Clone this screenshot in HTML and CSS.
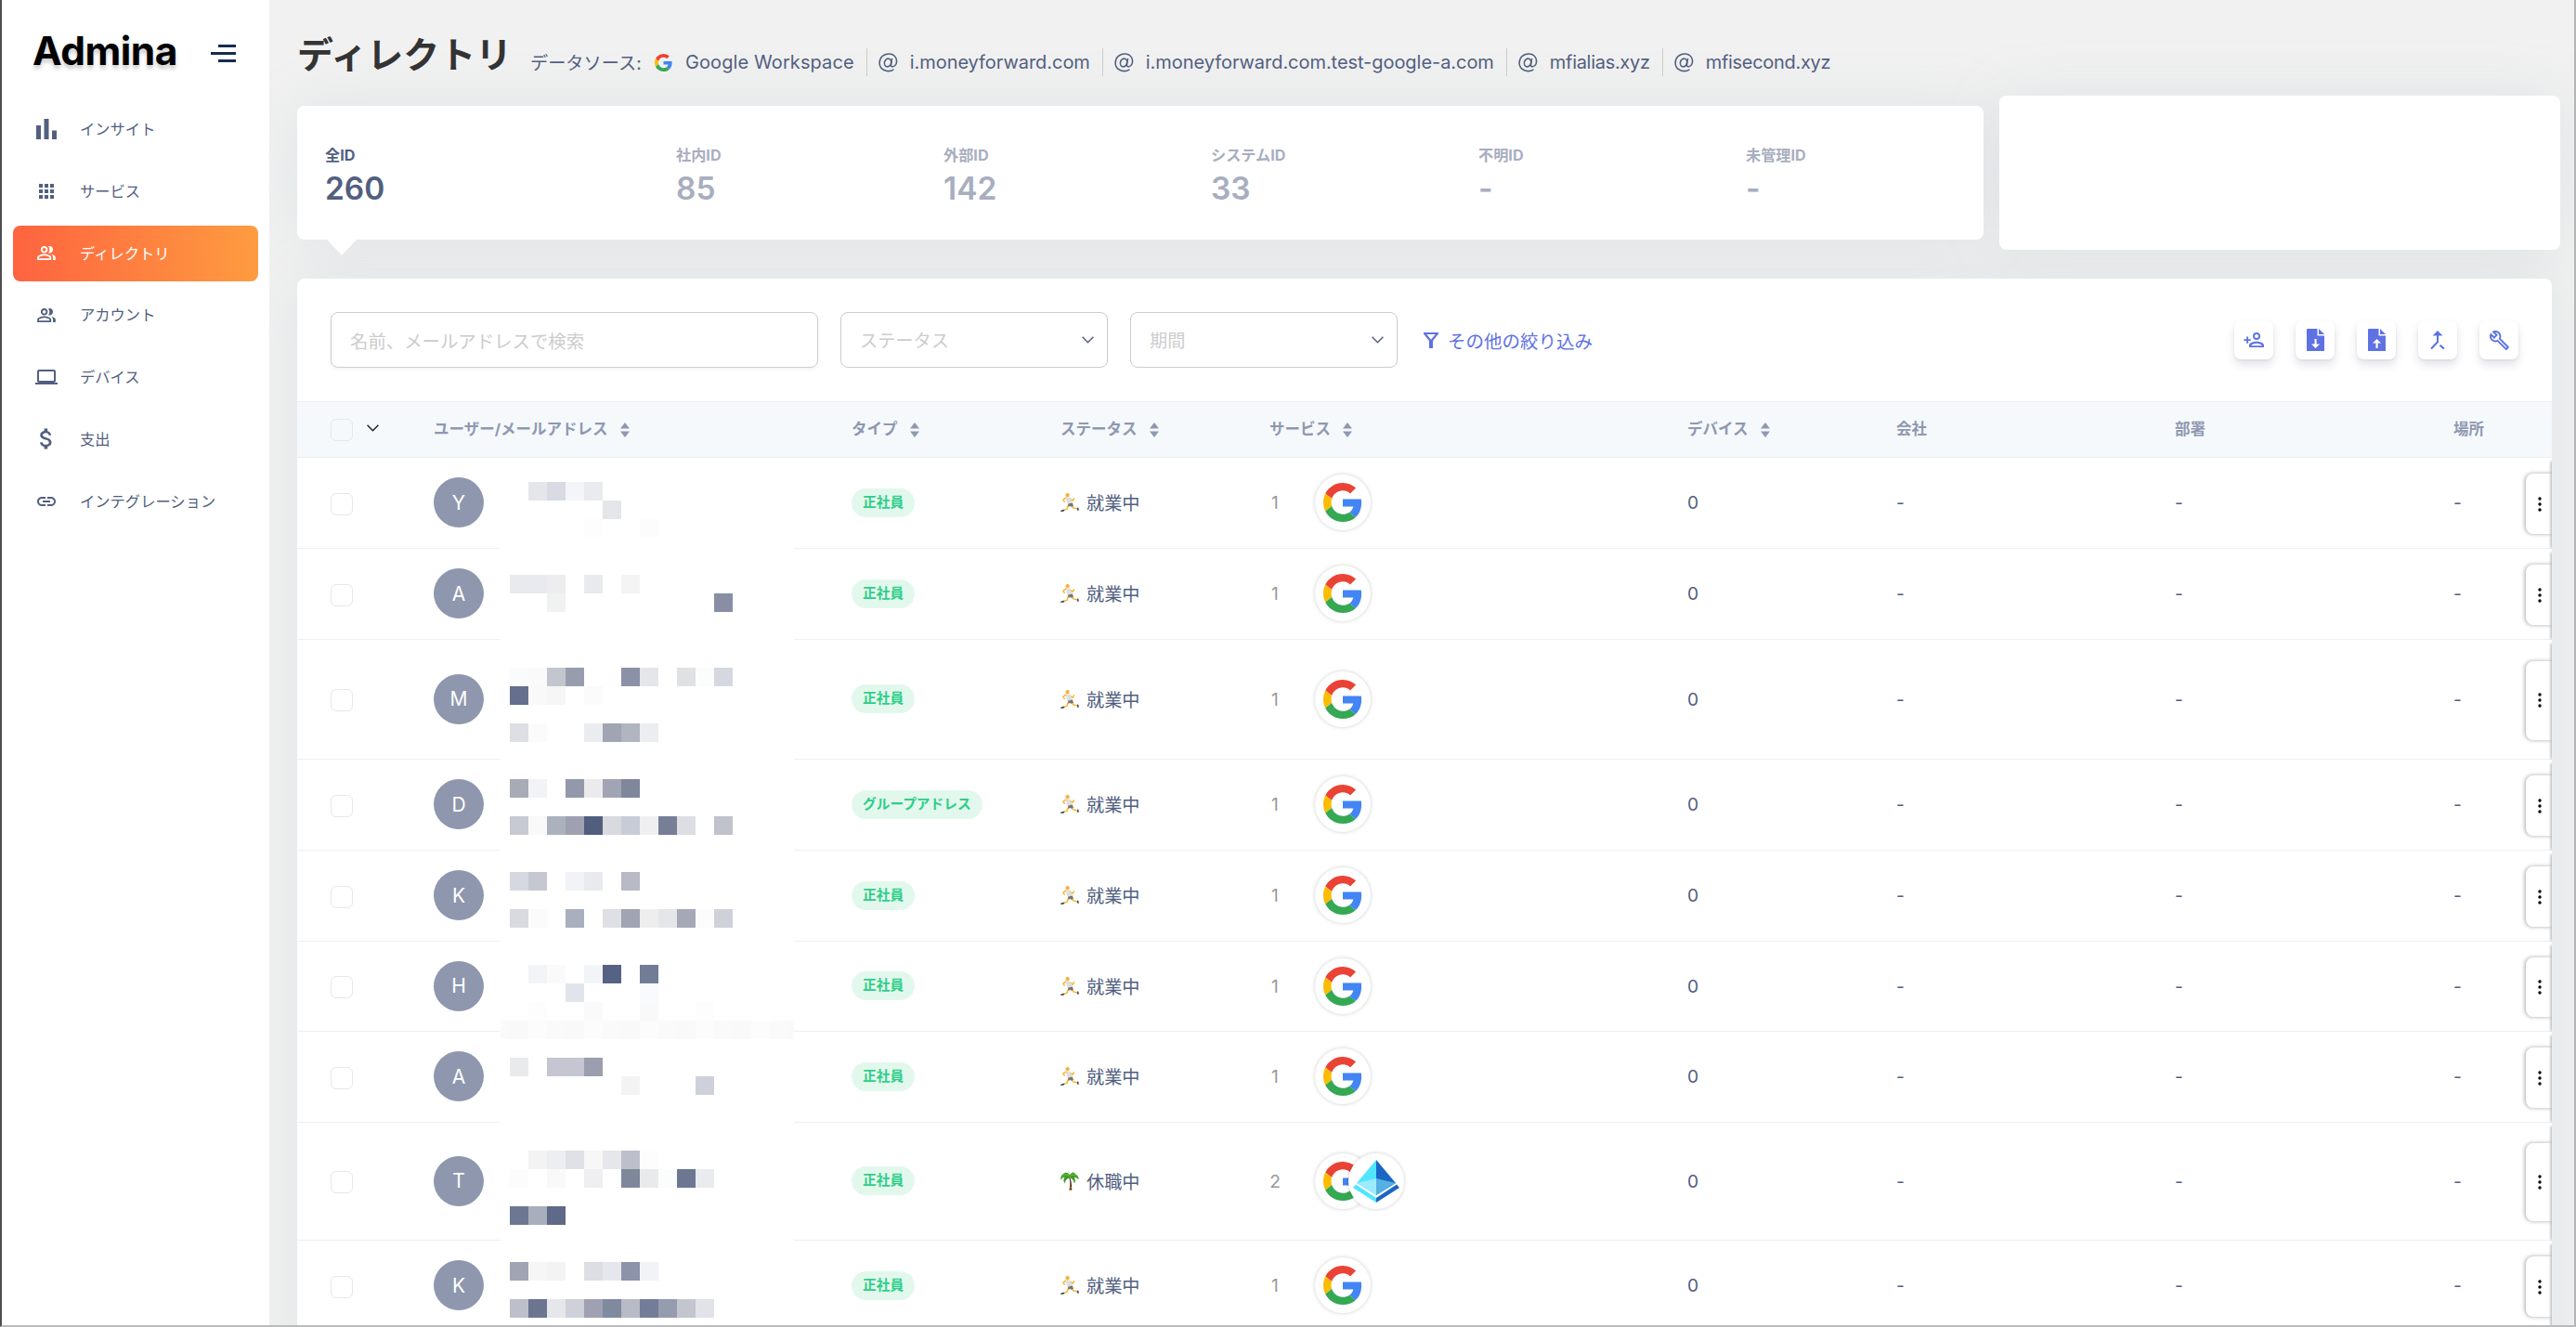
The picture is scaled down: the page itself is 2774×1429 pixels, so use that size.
FILE: index.html
```html
<!DOCTYPE html>
<html lang="ja">
  <head>
    <meta charset="UTF-8" />
    <meta name="viewport" content="width=device-width, initial-scale=1.0" />
    <title>Admina</title>
    <link rel="stylesheet" href="styles.css">
  </head>
  <body>
    <!-- icon sprite -->
    <svg class="sprite" xmlns="http://www.w3.org/2000/svg">
      <symbol id="i-bars" viewBox="0 0 22 22"><path d="M0 7h5v15H0zM8.500 0h5v22h-5zM17 12.500h5V22h-5z"/></symbol>
      <symbol id="i-grid" viewBox="0 0 16 16"><path d="M0 0h4v4H0zM6 0h4v4H6zM12 0h4v4h-4zM0 6h4v4H0zM6 6h4v4H6zM12 6h4v4h-4zM0 12h4v4H0zM6 12h4v4H6zM12 12h4v4h-4z"/></symbol>
      <symbol id="i-users" viewBox="1 4 21 16"><path d="M16.670 13.130C18.040 14.060 19 15.320 19 17v3h3v-3c0-2.180-3.570-3.470-6.330-3.870zM15 12c2.210 0 4-1.790 4-4s-1.790-4-4-4c-.47 0-.91.1-1.330.24C14.500 5.270 15 6.580 15 8s-.5 2.730-1.330 3.760c.42.140.86.240 1.330.24zM9 12c2.210 0 4-1.790 4-4s-1.790-4-4-4-4 1.790-4 4 1.790 4 4 4zm0-6c1.100 0 2 .9 2 2s-.9 2-2 2-2-.9-2-2 .9-2 2-2zM9 13c-2.670 0-8 1.340-8 4v3h16v-3c0-2.660-5.330-4-8-4zm6 5H3v-.99C3.200 16.290 6.300 15 9 15s5.800 1.290 6 2v1z"/></symbol>
      <symbol id="i-laptop" viewBox="0 4 24 16"><path d="M20 18c1.100 0 1.990-.9 1.990-2L22 6c0-1.100-.9-2-2-2H4c-1.100 0-2 .9-2 2v10c0 1.100.9 2 2 2H0v2h24v-2h-4zM4 6h16v10H4V6z"/></symbol>
      <symbol id="i-dollar" viewBox="6.300 3 11.400 18"><path d="M11.800 10.900c-2.270-.59-3-1.200-3-2.150 0-1.090 1.010-1.850 2.700-1.850 1.780 0 2.440.85 2.500 2.100h2.210c-.07-1.720-1.120-3.300-3.210-3.810V3h-3v2.160c-1.940.42-3.500 1.680-3.500 3.610 0 2.310 1.910 3.460 4.700 4.130 2.500.6 3 1.480 3 2.410 0 .69-.49 1.790-2.700 1.790-2.060 0-2.870-.92-2.980-2.100h-2.200c.12 2.190 1.760 3.420 3.680 3.830V21h3v-2.150c1.950-.37 3.500-1.500 3.500-3.550 0-2.840-2.430-3.810-4.700-4.400z"/></symbol>
      <symbol id="i-link" viewBox="2 7 20 10"><path d="M3.900 12c0-1.710 1.390-3.100 3.100-3.100h4V7H7c-2.760 0-5 2.240-5 5s2.240 5 5 5h4v-1.900H7c-1.710 0-3.100-1.390-3.100-3.100zM8 13h8v-2H8v2zm9-6h-4v1.900h4c1.710 0 3.100 1.390 3.100 3.100s-1.390 3.100-3.100 3.100h-4V17h4c2.760 0 5-2.240 5-5s-2.240-5-5-5z"/></symbol>
      <symbol id="i-google" viewBox="0 0 48 48">
        <path fill="#ea4335" d="M24 9.500c3.540 0 6.710 1.220 9.210 3.600l6.850-6.850C35.900 2.380 30.470 0 24 0 14.620 0 6.510 5.380 2.560 13.220l7.980 6.190C12.430 13.720 17.740 9.500 24 9.500z"/>
        <path fill="#4285f4" d="M46.980 24.550c0-1.570-.15-3.090-.38-4.550H24v9.020h12.940c-.58 2.960-2.260 5.480-4.780 7.180l7.730 6c4.510-4.180 7.090-10.360 7.090-17.650z"/>
        <path fill="#fbbc05" d="M10.530 28.590c-.48-1.450-.76-2.990-.76-4.590s.27-3.140.76-4.590l-7.980-6.190C.92 16.460 0 20.120 0 24c0 3.880.92 7.540 2.560 10.780l7.970-6.190z"/>
        <path fill="#34a853" d="M24 48c6.480 0 11.930-2.130 15.890-5.810l-7.730-6c-2.150 1.450-4.920 2.300-8.160 2.300-6.260 0-11.570-4.220-13.470-9.910l-7.980 6.190C6.510 42.620 14.620 48 24 48z"/>
      </symbol>
      <symbol id="i-azure" viewBox="0 0 50 46">
        <path fill="#50e6ff" d="M25 0 4 25 25 38z"/>
        <path fill="#1a66c2" d="M25 0 46 25 25 38z"/>
        <path fill="#9cebff" d="M25 20 4 25 25 38z"/>
        <path fill="#54b1e2" d="M25 20 46 25 25 38z"/>
        <path fill="#50e6ff" d="M3 26.500 25 41v5L0 30z"/>
        <path fill="#1a66c2" d="M47 26.500 25 41v5l25-16z"/>
      </symbol>
      <symbol id="i-runner" viewBox="0 0 19 20">
        <g fill="none" stroke="#f7b52c" stroke-width="1.400" stroke-linecap="round" stroke-linejoin="round">
          <path d="M5.500 5.300 2.800 7.300 4 9.300"/>
          <path d="M10 6.500 12.500 8.300 13.800 6"/>
          <path d="M8 13 6.500 17 2 18.300"/>
          <path d="M11.500 13 13 15.500 17.300 16.800"/>
        </g>
        <path fill="#dedede" d="M5.500 4.800h4.300l2.600 6.300-4.700 1.500L6.300 9z"/>
        <path fill="#77736f" d="m7.600 11.700 4.600-1.300 1.100 3.500-2.600.7-.8-1-1.700 1.200z"/>
        <circle cx="7.200" cy="2.500" r="2.100" fill="#f5b13a"/>
        <path stroke="#3d4a66" stroke-width="1.500" stroke-linecap="round" d="m.9 18.800 2.400-.6M17.700 15.900l.3 1.800"/>
      </symbol>
      <symbol id="i-palm" viewBox="0 0 20 22">
        <path fill="#5b4230" d="M10.300 6.500c1.500 4.500 2 9 1.900 14.500H9.400C10.300 16 10.600 11.500 9.300 7z"/>
        <path stroke="#d9832e" stroke-width="1" d="M9.500 20.300h2.500M9.800 17.600h1.800"/>
        <path fill="#3f9a25" d="M10 4.500C8.500 1 4.500 1 3 3.300 1 4 0 6.500.3 10 1.500 7.800 3 6.800 4.500 6.600 3 8.500 3 11.300 4.600 13.500 5 10.500 6.700 8.300 9.700 7.300c2.700.5 4.600 2.700 5.100 6.200 1.500-2.300 1.300-5-.2-6.700 2 0 3.500.8 4.900 2.700C19.700 6.500 18.500 4.300 16.300 3.500 15 .9 11.300 1.200 10 4.500z"/>
        <path fill="none" stroke="#8bd052" stroke-width=".8" d="M9.500 5.500C7 3 4 3.500 2 5.800M10.500 5.500c2.500-2.300 5.500-1.800 7.200.5M10 2l-1.500-1.200M12 2.300l2-1.300"/>
      </symbol>
      <symbol id="i-at" viewBox="0 0 19.500 20"><g fill="none" stroke="currentColor" stroke-width="1.500"><ellipse cx="9.300" cy="10" rx="3.400" ry="4.200" transform="rotate(15 9.300 10)"/><path d="M13.600 5.500 12.600 12c-.3 3 4 2.600 5.300-.8C19.700 5.500 16 .9 10.300.9 4.800.9.800 5 .8 10.300.800 17 8.500 21 15.500 17"/></g></symbol>
      <symbol id="i-add-user" viewBox="0 0 22 17"><path d="M3.200 4.500h1.900v2.700h2.700v1.900H5.100v2.700H3.200V9.100H.4V7.200h2.800z"/><path fill-rule="evenodd" d="M14 0a4 4 0 1 1 0 8 4 4 0 0 1 0-8zm0 1.900a2.100 2.100 0 1 0 0 4.200 2.100 2.100 0 0 0 0-4.200zM6 16v-2.200c0-2.600 5-4 8-4s8 1.400 8 4V16zm2.200-1.800h11.600c-.4-1.200-3.300-2.500-5.800-2.500s-5.400 1.300-5.800 2.500z"/></symbol>
      <symbol id="i-download" viewBox="0 0 19 24"><path fill-rule="evenodd" d="M1 0h10.500v7.500H19V24H0V1a1 1 0 0 1 1-1zm7.500 11v5.500H5L9.500 21l4.600-4.500h-3.500V11z"/><path d="M13 0l6 6h-6z"/></symbol>
      <symbol id="i-upload" viewBox="0 0 19 24"><path fill-rule="evenodd" d="M1 0h10.500v7.500H19V24H0V1a1 1 0 0 1 1-1zm7.500 21v-5.500H5L9.500 11l4.600 4.500h-3.500V21z"/><path d="M13 0l6 6h-6z"/></symbol>
      <symbol id="i-merge" viewBox="0 0 16 21"><path d="M8 0 2.500 5.500H7v6.300L.3 18.700l1.500 1.500L9 12.800V5.500h4.500zM9.700 16.400l1.500-1.500 4.500 3.800-1.500 1.500z"/></symbol>
      <symbol id="i-wrench" viewBox="0 0 24 24"><path fill-rule="evenodd" d="M22.610 18.990l-9.080-9.080c.93-2.340.45-5.100-1.440-7C9.790.61 6.210.4 3.660 2.260L7.500 6.110 6.080 7.520 2.250 3.690C.39 6.230.6 9.820 2.900 12.110c1.860 1.860 4.570 2.350 6.890 1.480l9.110 9.110c.39.39 1.020.39 1.410 0l2.300-2.300c.4-.38.4-1.010 0-1.410zm-3 1.600l-9.460-9.460c-.61.45-1.290.72-2 .82-1.360.2-2.790-.21-3.830-1.250C3.370 9.760 2.930 8.500 3 7.260l3.090 3.090 4.240-4.240-3.090-3.090c1.240-.07 2.490.37 3.440 1.310 1.080 1.080 1.490 2.570 1.240 3.960-.12.710-.42 1.370-.88 1.960l9.450 9.450-.88.890z"/></symbol>
      <symbol id="i-filter" viewBox="0 0 16 17"><path fill-rule="evenodd" d="M0 0h16v1.500L10 9v8H6V9L0 1.500zm3.300 2L8 7.800 12.700 2z"/></symbol>
      <symbol id="i-chevron" viewBox="0 0 13 8"><path fill="none" stroke="currentColor" stroke-width="1.500" d="M.6.800 6.500 6.700 12.400.8"/></symbol>
      <symbol id="i-sort" viewBox="0 0 10 16"><path d="M5 0l5 6.500H0zM5 16 0 9.500h10z"/></symbol>
      <symbol id="i-dots" viewBox="0 0 4 16"><circle cx="2" cy="2" r="1.700"/><circle cx="2" cy="8" r="1.700"/><circle cx="2" cy="14" r="1.700"/></symbol>
    </svg>

    <div class="app">
      <aside class="sidebar">
        <div class="brand">
          <span class="logo">Admina</span>
          <span class="menu-toggle"><i></i><i></i><i></i></span>
        </div>
        <nav class="menu">
          <a class="menu-item"><span class="menu-icon"><svg width="22" height="22"><use href="#i-bars"/></svg></span>インサイト</a>
          <a class="menu-item"><span class="menu-icon"><svg width="16" height="16"><use href="#i-grid"/></svg></span>サービス</a>
          <a class="menu-item active"><span class="menu-icon"><svg width="20" height="15"><use href="#i-users"/></svg></span>ディレクトリ</a>
          <a class="menu-item"><span class="menu-icon"><svg width="20" height="15"><use href="#i-users"/></svg></span>アカウント</a>
          <a class="menu-item"><span class="menu-icon"><svg width="24" height="16"><use href="#i-laptop"/></svg></span>デバイス</a>
          <a class="menu-item"><span class="menu-icon"><svg width="14" height="23"><use href="#i-dollar"/></svg></span>支出</a>
          <a class="menu-item"><span class="menu-icon"><svg width="20" height="10"><use href="#i-link"/></svg></span>インテグレーション</a>
        </nav>
      </aside>

      <main class="main">
        <header class="page-header">
          <h1>ディレクトリ</h1>
          <div class="sources">
            <span class="sources-label">データソース:</span>
            <span class="source google"><svg width="19" height="19"><use href="#i-google"/></svg>Google Workspace</span>
            <span class="source"><svg width="21" height="21"><use href="#i-at"/></svg>i.moneyforward.com</span>
            <span class="source"><svg width="21" height="21"><use href="#i-at"/></svg>i.moneyforward.com.test-google-a.com</span>
            <span class="source alias"><svg width="21" height="21"><use href="#i-at"/></svg>mfialias.xyz</span>
            <span class="source alias"><svg width="21" height="21"><use href="#i-at"/></svg>mfisecond.xyz</span>
          </div>
        </header>

        <section class="summary">
          <div class="card stats">
            <div class="stat current"><span>全ID</span><b>260</b></div>
            <div class="stat"><span>社内ID</span><b>85</b></div>
            <div class="stat"><span>外部ID</span><b>142</b></div>
            <div class="stat"><span>システムID</span><b>33</b></div>
            <div class="stat"><span>不明ID</span><b>-</b></div>
            <div class="stat"><span>未管理ID</span><b>-</b></div>
          </div>
          <div class="card blank"></div>
        </section>

        <section class="card panel">
          <div class="toolbar">
            <div class="field search">名前、メールアドレスで検索</div>
            <div class="field select">ステータス<svg width="13" height="8"><use href="#i-chevron"/></svg></div>
            <div class="field select">期間<svg width="13" height="8"><use href="#i-chevron"/></svg></div>
            <a class="more-filters"><svg width="16" height="17"><use href="#i-filter"/></svg>その他の絞り込み</a>
            <div class="actions">
              <button><svg width="22" height="17"><use href="#i-add-user"/></svg></button>
              <button><svg width="19" height="24"><use href="#i-download"/></svg></button>
              <button><svg width="19" height="24"><use href="#i-upload"/></svg></button>
              <button><svg width="16" height="21"><use href="#i-merge"/></svg></button>
              <button><svg width="23" height="23"><use href="#i-wrench"/></svg></button>
            </div>
          </div>

          <div class="row table-head">
            <div class="cell check"><span class="checkbox"></span><svg width="13" height="8"><use href="#i-chevron"/></svg></div>
            <div class="cell">ユーザー/メールアドレス<svg class="sort" width="10" height="16"><use href="#i-sort"/></svg></div>
            <div class="cell">タイプ<svg class="sort" width="10" height="16"><use href="#i-sort"/></svg></div>
            <div class="cell">ステータス<svg class="sort" width="10" height="16"><use href="#i-sort"/></svg></div>
            <div class="cell">サービス<svg class="sort" width="10" height="16"><use href="#i-sort"/></svg></div>
            <div class="cell">デバイス<svg class="sort" width="10" height="16"><use href="#i-sort"/></svg></div>
            <div class="cell">会社</div>
            <div class="cell">部署</div>
            <div class="cell">場所</div>
          </div>
          <div class="table-body" id="rows"></div>
        </section>
      </main>
    </div>
    <script src="script.js"></script>
  </body>
</html>
```
FILE: styles.css
```css
* {
  box-sizing: border-box;
}
body {
  margin: 0;
  height: 1429px;
  overflow: hidden;
  font-family: Inter, "Noto Sans CJK JP", sans-serif;
  font-size: 19.2px;
  color: #525f7f;
  background-color: #f1f1f1;
}
svg {
  display: block;
  flex: none;
  fill: currentColor;
}
.sprite {
  position: absolute;
  width: 0;
  height: 0;
}
.app {
  display: flex;
  height: 1429px;
  overflow: hidden;
  border-left: 2px solid #4d4f54;
  border-right: 2px solid #b5b5b5;
  border-bottom: 2px solid #bbbbbb;
}

/* sidebar */
.sidebar {
  position: relative;
  z-index: 1;
  flex: none;
  width: 288px;
  background-color: #fff;
}
.brand {
  display: flex;
  align-items: center;
  justify-content: space-between;
  height: 110px;
  padding: 0 36px 0 33px;
}
.logo {
  color: #000;
  font-size: 42.500px;
  font-weight: 650;
  letter-spacing: -0.5px;
  line-height: 1;
  text-shadow: 0 4px 4px rgba(0, 0, 0, 0.2);
}
.menu-toggle {
  display: flex;
  flex-direction: column;
  align-items: flex-end;
  gap: 5px;
  padding-top: 5px;
}
.menu-toggle i {
  width: 19px;
  height: 3px;
  background-color: #172b4d;
}
.menu-toggle i:nth-child(2) {
  width: 27px;
}
.menu {
  display: flex;
  flex-direction: column;
  gap: 6.800px;
  padding: 0 12px;
  margin-top: -1px;
}
.menu-item {
  display: flex;
  align-items: center;
  height: 60px;
  padding-bottom: 2px;
  font-size: 16.300px;
  border-radius: 8px;
}
.menu-icon {
  display: flex;
  justify-content: center;
  width: 24px;
  margin: 2px 24px 0 24px;
}
.menu-item.active {
  color: #fff;
  background: linear-gradient(87deg, #fe6340, #fe9c40);
}

/* page header */
.main {
  flex: none;
  isolation: isolate;
  width: 2480px;
  padding-left: 30px;
}
.page-header {
  display: flex;
  height: 103px;
}
h1 {
  width: 251px;
  margin: 29px 0 0;
  color: #333;
  font-size: 39px;
  font-weight: 700;
  line-height: 60px;
  white-space: nowrap;
}
.sources {
  display: flex;
  align-items: center;
  height: 30px;
  margin-top: 52px;
}
.sources-label {
  width: 134px;
  white-space: nowrap;
}
.source {
  display: flex;
  align-items: center;
  gap: 13px;
  height: 30px;
  padding: 0 13px 0 12px;
  white-space: nowrap;
  font-size: 20px;
  letter-spacing: -0.050px;
  border-left: 1px solid #ccc;
}
.source.google {
  padding-left: 0;
  gap: 14px;
  letter-spacing: 0.100px;
  border-left: 0;
}
.source.alias {
  letter-spacing: -0.300px;
}

/* cards, the shadow sits behind every card */
.card {
  position: relative;
  background-color: #fff;
  border-radius: 8px;
}
.card::before {
  content: "";
  position: absolute;
  z-index: -1;
  inset: 0;
  border-radius: 8px;
  box-shadow: 0 0 64px rgba(136, 152, 170, 0.15);
}
.summary {
  display: flex;
  gap: 17px;
  height: 197px;
}
.stats {
  display: grid;
  grid-template-columns: 378px repeat(5, 288px);
  width: 1816px;
  height: 144px;
  margin-top: 11px;
  padding: 42px 0 0 30px;
}
.stats::after {
  content: "";
  position: absolute;
  top: 144px;
  left: 32px;
  border: 16px solid transparent;
  border-top: 17px solid #fff;
  border-bottom: 0;
}
.stat {
  display: flex;
  flex-direction: column;
  color: #a8aec0;
  font-size: 16.200px;
  font-weight: 700;
}
.stat span {
  line-height: 23px;
}
.stat b {
  font-size: 33.500px;
  font-weight: 600;
  line-height: 48px;
}
.stat.current {
  color: #525f7f;
}
.blank {
  width: 604px;
  height: 166px;
}

/* panel */
.panel {
  width: 2428px;
  height: 1200px;
}
.toolbar {
  display: flex;
  align-items: center;
  gap: 24px;
  height: 132px;
  padding: 0 36px;
}
.field {
  display: flex;
  align-items: center;
  height: 60px;
  padding: 0 20px;
  color: #ccc;
  border: 1px solid #ccc;
  border-radius: 8px;
}
.search {
  width: 525px;
  font-size: 19.400px;
  box-shadow: 0 2px 4px rgba(50, 50, 93, 0.06);
}
.select {
  justify-content: space-between;
  width: 288px;
  padding-right: 14px;
}
.select svg {
  color: #525f7f;
}
.more-filters {
  display: flex;
  align-items: center;
  gap: 10px;
  margin-left: 4px;
  color: #5e72e4;
  font-size: 19.500px;
}
.actions {
  display: flex;
  gap: 24px;
  margin-left: auto;
}
.actions button {
  display: flex;
  align-items: center;
  justify-content: center;
  width: 42px;
  height: 42px;
  padding: 0;
  color: #5e72e4;
  background-color: #fff;
  border: 0;
  border-radius: 7px;
  box-shadow: 0 6px 10px rgba(50, 50, 93, 0.13), 0 1px 3px rgba(0, 0, 0, 0.07);
}

/* table */
.row {
  position: relative;
  display: grid;
  grid-template-columns: 147px 450px 225px 225px 450px 225px 300px 300px 106px;
  align-items: center;
  border-bottom: 1px solid #eeeff1;
}
.table-head {
  height: 61px;
  color: #8f98b0;
  font-size: 16.500px;
  font-weight: 700;
  background-color: #f5f9fc;
  border-top: 1px solid #eeeff1;
}
.cell {
  display: flex;
  align-items: center;
  padding-bottom: 1px;
}
.table-head .cell {
  padding-bottom: 3px;
}
.cell.check {
  gap: 15px;
  padding-left: 36px;
  color: #222;
}
.sort {
  margin: 3px 0 0 13px;
}
.checkbox {
  width: 24px;
  height: 24px;
  margin-top: 3px;
  border: 1px solid #e6e7ea;
  border-radius: 6px;
}
.avatar {
  display: flex;
  align-items: center;
  justify-content: center;
  width: 54px;
  height: 54px;
  color: #fff;
  font-size: 21px;
  background-color: #8e97ad;
  border-radius: 50%;
}
.badge {
  padding: 0 12px;
  color: #2dce89;
  font-size: 14.700px;
  font-weight: 700;
  line-height: 31px;
  background-color: #e3f8ed;
  border-radius: 16px;
}
.status {
  gap: 8px;
}
.status svg {
  width: 20px;
}
.count {
  width: 12px;
  color: #999;
  text-align: center;
}
.services {
  display: flex;
  margin-left: 37px;
}
.service {
  display: flex;
  align-items: center;
  justify-content: center;
  width: 60px;
  height: 60px;
  background-color: #fff;
  border-radius: 50%;
  box-shadow: 0 0 4px rgba(0, 0, 0, 0.2);
}
.service + .service {
  margin-left: -24px;
}
.row-menu {
  position: absolute;
  top: 17.800%;
  right: 0;
  bottom: 15.600%;
  display: flex;
  align-items: center;
  width: 28px;
  padding-left: 13px;
  color: #000;
  background-color: #fff;
  border-radius: 8px 0 0 8px;
  box-shadow: -1px 0 4px rgba(0, 0, 0, 0.35);
}
.table-body {
  position: relative;
  overflow: hidden;
}
.table-body .row::after {
  content: "";
  position: absolute;
  top: 4px;
  right: -2px;
  bottom: 0;
  width: 2px;
  box-shadow: -1px 0 3px rgba(0, 0, 0, 0.4);
}
.mosaic {
  position: absolute;
  top: 0;
  left: 219px;
}
```
FILE: script.js
```js
const members = [
  { initial: "Y", height: 98 },
  { initial: "A", height: 98 },
  { initial: "M", height: 129 },
  { initial: "D", height: 98, type: "グループアドレス" },
  { initial: "K", height: 98 },
  { initial: "H", height: 97 },
  { initial: "A", height: 98 },
  { initial: "T", height: 127, onLeave: true, services: ["google", "azure"] },
  { initial: "K", height: 98 },
];

// masked names: line number -> { column: colour }, 20px squares
const mask = {
  0: { 1: "#e5e6ea", 2: "#d8dbe3", 3: "#f4f5f8", 4: "#eaebef" },
  1: { 5: "#e5e6ea" },
  2: { 4: "#fdfdfd", 7: "#fcfcfc" },
  5: { 0: "#e8eaee", 1: "#e9eaef", 2: "#ededef", 4: "#e8eaee", 6: "#f4f4f4" },
  6: { 2: "#f0f1f1", 11: "#888fa5" },
  10: { 0: "#f9fbfd", 1: "#fafafb", 2: "#c3c5cf", 3: "#989dae", 6: "#8b92a8", 7: "#e5e6ea", 9: "#e0e1e3", 10: "#fbfdfd", 11: "#d5d8e0" },
  11: { 0: "#66708c", 1: "#f9f9f9", 2: "#f6f6f6", 4: "#fbfbfb" },
  13: { 0: "#dedfe4", 1: "#fbfbfb", 4: "#ebecf0", 5: "#a1a4b2", 6: "#b1b5bf", 7: "#ebedf1" },
  16: { 0: "#a7abb6", 1: "#f2f3f6", 3: "#9398ab", 4: "#ebebed", 5: "#a1a4b2", 6: "#7f879b" },
  18: { 0: "#c7c9d3", 1: "#f9f9fa", 2: "#abb1bd", 3: "#9fa1b2", 4: "#515e7e", 5: "#d9dadf", 6: "#c8ccd6", 7: "#efeff1", 8: "#777f97", 9: "#dddee3", 11: "#c0c2cc" },
  21: { 0: "#d5d8e0", 1: "#c6c8d1", 3: "#f2f3f6", 4: "#e8eaee", 6: "#b8bac6" },
  23: { 0: "#d9dadf", 1: "#fbfbfb", 3: "#a9afbd", 5: "#dfe0e5", 6: "#a1a4b2", 7: "#eeeeee", 8: "#e5e6ea", 9: "#a5a9b7", 10: "#fcfcfc", 11: "#cfd1da" },
  26: { 1: "#f3f4f7", 2: "#fafafa", 4: "#f3f4f7", 5: "#566283", 7: "#717c95" },
  27: { 3: "#e1e4eb", 7: "#f8fafd" },
  28: { 1: "#fdfdfd", 4: "#fafafa", 7: "#f9f9f9", 10: "#fdfdfd" },
  29: { "-1": "#fafafa", 0: "#f9f9f9", 1: "#fcfcfc", 2: "#fafafa", 3: "#f9f9f9", 4: "#fcfcfc", 5: "#fafafa", 6: "#f9f9f9", 7: "#fcfcfc", 8: "#fafafa", 9: "#f9f9f9", 10: "#fcfcfc", 11: "#fafafa", 12: "#f9f9f9", 13: "#fcfcfc", 14: "#fafafa", 15: "#f9f9f9" },
  31: { 0: "#e9eaec", 2: "#c5c6d2", 3: "#c5c6d2", 4: "#9a9eae" },
  32: { 6: "#f3f3f3", 10: "#cfd1da" },
  36: { 1: "#f3f3f4", 2: "#edeef2", 3: "#e0e1e6", 4: "#f7f7f7", 5: "#e6e7eb", 6: "#bdc0ca", 7: "#fdfdfd" },
  37: { 0: "#fcfcfc", 2: "#f9f9f9", 4: "#efeff1", 6: "#7e889a", 7: "#e9eaec", 8: "#fbfdfd", 9: "#6d7791", 10: "#eaebef" },
  39: { 0: "#6d7791", 1: "#a8aebb", 2: "#5f6a88" },
  42: { 0: "#a1a4b2", 1: "#f6f6f7", 2: "#f3f3f3", 4: "#dddee3", 5: "#e6e7ed", 6: "#8d93a8", 7: "#f2f3f6" },
  44: { 0: "#bdc0ca", 1: "#6b7590", 2: "#e5e7ea", 3: "#cfd1da", 4: "#9fa1b2", 5: "#808a9e", 6: "#b8bac6", 7: "#737d99", 8: "#959cae", 9: "#c3c5cf", 10: "#e2e3e8" },
};

const serviceIcons = {
  google: '<svg width="42" height="42"><use href="#i-google"/></svg>',
  azure: '<svg width="50" height="46"><use href="#i-azure"/></svg>',
};

function renderRow(member) {
  const services = member.services || ["google"];
  const circles = services
    .map((name) => `<span class="service">${serviceIcons[name]}</span>`)
    .join("");
  const icon = member.onLeave ? "palm" : "runner";

  return `
    <div class="row" style="height: ${member.height}px">
      <div class="cell check"><span class="checkbox"></span></div>
      <div class="cell"><span class="avatar">${member.initial}</span></div>
      <div class="cell"><span class="badge">${member.type || "正社員"}</span></div>
      <div class="cell status"><svg height="22"><use href="#i-${icon}"/></svg>${member.onLeave ? "休職中" : "就業中"}</div>
      <div class="cell"><span class="count">${services.length}</span><span class="services">${circles}</span></div>
      <div class="cell">0</div>
      <div class="cell">-</div>
      <div class="cell">-</div>
      <div class="cell">-</div>
      <div class="row-menu"><svg width="4" height="16"><use href="#i-dots"/></svg></div>
    </div>`;
}

function renderMask() {
  const squares = [];
  for (const [line, columns] of Object.entries(mask)) {
    for (const [column, colour] of Object.entries(columns)) {
      squares.push(`<rect x="${10 + column * 20}" y="${26 + line * 20}" width="20" height="20" fill="${colour}"/>`);
    }
  }
  return `<svg class="mosaic" width="316" height="934" shape-rendering="crispEdges"><rect y="10" width="316" height="924" fill="#fff"/>${squares.join("")}</svg>`;
}

document.getElementById("rows").innerHTML = members.map(renderRow).join("") + renderMask();
```
